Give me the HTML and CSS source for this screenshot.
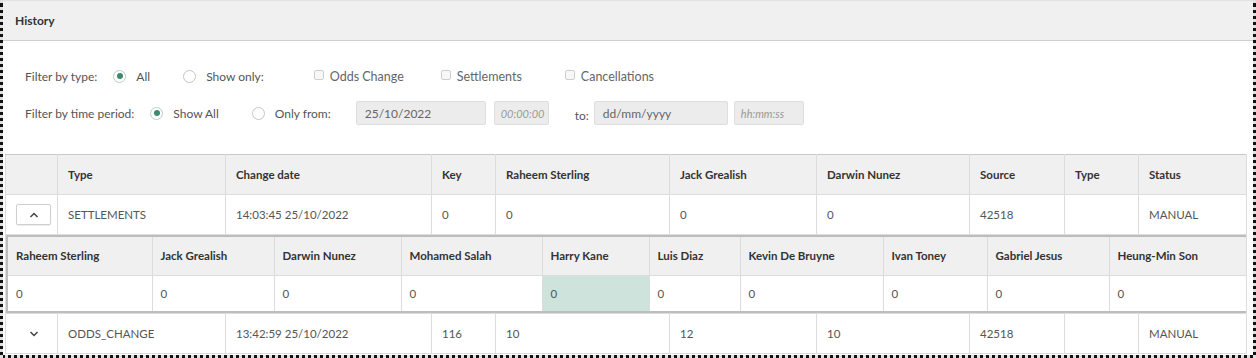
FILE: index.html
```html
<!DOCTYPE html>
<html lang="en">

<head>
    <meta charset="utf-8">
    <meta name="viewport" content="width=device-width, initial-scale=1.0">
    <title>History</title>
    <link rel="stylesheet" href="styles.css">
</head>

<body>
    <div class="ramme">
        <section class="panel">
            <header class="panel-top">
                <h1>History</h1>
            </header>

            <div class="filtre">
                <div class="filter-linje">
                    <span class="label">Filter by type:</span>
                    <label class="valg"><span class="radio valgt"></span>All</label>
                    <label class="valg"><span class="radio"></span>Show only:</label>
                    <label class="check foerste"><span class="boks"></span>Odds Change</label>
                    <label class="check"><span class="boks"></span>Settlements</label>
                    <label class="check sidste"><span class="boks"></span>Cancellations</label>
                </div>
                <div class="filter-linje">
                    <span class="label">Filter by time period:</span>
                    <label class="valg"><span class="radio valgt"></span>Show All</label>
                    <label class="valg"><span class="radio"></span>Only from:</label>
                    <span class="felt dato">25/10/2022</span>
                    <span class="felt tid">00:00:00</span>
                    <span class="til">to:</span>
                    <span class="felt dato2">dd/mm/yyyy</span>
                    <span class="felt tid tid2">hh:mm:ss</span>
                </div>
            </div>

            <table class="historik">
                <colgroup>
                    <col style="width:52px">
                    <col style="width:168px">
                    <col style="width:206px">
                    <col style="width:64px">
                    <col style="width:174px">
                    <col style="width:147px">
                    <col style="width:153px">
                    <col style="width:95px">
                    <col style="width:74px">
                    <col style="width:108px">
                </colgroup>
                <thead>
                    <tr>
                        <th></th>
                        <th>Type</th>
                        <th>Change date</th>
                        <th>Key</th>
                        <th>Raheem Sterling</th>
                        <th>Jack Grealish</th>
                        <th>Darwin Nunez</th>
                        <th>Source</th>
                        <th>Type</th>
                        <th>Status</th>
                    </tr>
                </thead>
                <tbody>
                    <tr>
                        <td class="knap-celle">
                            <button class="fold aaben">
                                <svg width="10" height="6" viewBox="0 0 10 6"><path d="M1.5 5 L5 1.5 L8.5 5" fill="none" stroke="#444" stroke-width="1.5"/></svg>
                            </button>
                        </td>
                        <td>SETTLEMENTS</td>
                        <td>14:03:45 25/10/2022</td>
                        <td>0</td>
                        <td>0</td>
                        <td>0</td>
                        <td>0</td>
                        <td>42518</td>
                        <td></td>
                        <td>MANUAL</td>
                    </tr>
                    <tr class="detalje-raekke">
                        <td colspan="10">
                            <table class="detalje">
                                <colgroup>
                                    <col style="width:145px">
                                    <col style="width:122px">
                                    <col style="width:127px">
                                    <col style="width:141px">
                                    <col style="width:107px">
                                    <col style="width:91px">
                                    <col style="width:143px">
                                    <col style="width:104px">
                                    <col style="width:122px">
                                    <col style="width:139px">
                                </colgroup>
                                <thead>
                                    <tr>
                                        <th>Raheem Sterling</th>
                                        <th>Jack Grealish</th>
                                        <th>Darwin Nunez</th>
                                        <th>Mohamed Salah</th>
                                        <th>Harry Kane</th>
                                        <th>Luis Diaz</th>
                                        <th>Kevin De Bruyne</th>
                                        <th>Ivan Toney</th>
                                        <th>Gabriel Jesus</th>
                                        <th>Heung-Min Son</th>
                                    </tr>
                                </thead>
                                <tbody>
                                    <tr>
                                        <td>0</td>
                                        <td>0</td>
                                        <td>0</td>
                                        <td>0</td>
                                        <td class="markeret">0</td>
                                        <td>0</td>
                                        <td>0</td>
                                        <td>0</td>
                                        <td>0</td>
                                        <td>0</td>
                                    </tr>
                                </tbody>
                            </table>
                        </td>
                    </tr>
                    <tr>
                        <td class="knap-celle">
                            <button class="fold">
                                <svg width="10" height="6" viewBox="0 0 10 6"><path d="M1.5 1 L5 4.5 L8.5 1" fill="none" stroke="#444" stroke-width="1.5"/></svg>
                            </button>
                        </td>
                        <td>ODDS_CHANGE</td>
                        <td>13:42:59 25/10/2022</td>
                        <td>116</td>
                        <td>10</td>
                        <td>12</td>
                        <td>10</td>
                        <td>42518</td>
                        <td></td>
                        <td>MANUAL</td>
                    </tr>
                </tbody>
            </table>
        </section>
    </div>
</body>

</html>
```

FILE: styles.css
```css
* {
    box-sizing: border-box;
}

body {
    margin: 0;
    font-family: "Lato", "Open Sans", sans-serif;
    color: #444;
    background: #fff;
}

/* stiplet kant rundt om udsnittet */
.ramme {
    height: 358px;
    overflow: hidden;
    background-color: #111;
    border: 3px dotted #e0e0e0;
    border-top: none;
}

.panel {
    background: #fff;
    height: 100%;
}

.panel-top {
    height: 41px;
    background: #f0f0f0;
    border-top: 1px solid #e2e2e2;
    border-bottom: 1px solid #cfcfcf;
    display: flex;
    align-items: center;
    padding-left: 12px;
}

h1 {
    margin: 0;
    font-size: 12px;
    font-weight: 700;
    color: #333;
}

.filtre {
    padding: 23px 0 29px 22px;
    display: flex;
    flex-direction: column;
    gap: 13px;
    font-size: 12px;
    color: #555;
}

.filter-linje {
    display: flex;
    align-items: center;
    height: 24px;
}

.label {
    margin-right: 16px;
}

.valg {
    display: flex;
    align-items: center;
    gap: 10px;
    margin-right: 33px;
}

.radio {
    width: 13px;
    height: 13px;
    border: 1px solid #c4c4c4;
    border-radius: 50%;
    background: #fff;
    position: relative;
}

.radio.valgt {
    border-color: #b7cfc6;
}

.radio.valgt::after {
    content: "";
    position: absolute;
    top: 2.5px;
    left: 2.5px;
    width: 6px;
    height: 6px;
    border-radius: 50%;
    background: #3f8a6c;
}

.check {
    display: flex;
    align-items: center;
    gap: 6px;
    margin-left: 37px;
    font-size: 12.5px;
    color: #666;
}

.check.foerste {
    margin-left: 17px;
}

.check.sidste {
    margin-left: 43px;
}

.boks {
    width: 10px;
    height: 10px;
    border: 1px solid #cfcfcf;
    border-radius: 2px;
    background: #f7f7f7;
    margin-top: -3px;
}

.felt {
    height: 24px;
    display: flex;
    align-items: center;
    padding-left: 8px;
    background: #ececec;
    border: 1px solid #dedede;
    border-radius: 2px;
    color: #666;
}

.dato {
    width: 130px;
    margin-left: -8px;
}

.dato2 {
    width: 134px;
}

.tid {
    width: 55px;
    margin-left: 8px;
    font-style: italic;
    color: #999;
    font-size: 11px;
    padding-left: 6px;
}

.tid2 {
    width: 70px;
    margin-left: 6px;
}

.til {
    margin: 5px 5px 0 26px;
}

/* tabeller */
table {
    border-collapse: collapse;
    table-layout: fixed;
}

.historik {
    width: 1241px;
    margin-left: 2px;
    font-size: 11.5px;
}

.historik th,
.historik td {
    border: 1px solid #dcdcdc;
    text-align: left;
    padding: 0 10px;
    overflow: hidden;
    white-space: nowrap;
}

.historik th {
    height: 40px;
    background: #f0f0f0;
    color: #333;
    font-weight: 700;
}

.historik td {
    height: 40px;
    color: #555;
}

.historik > thead th {
    border-top-color: #c8c8c8;
}

.knap-celle {
    text-align: center !important;
}

.fold {
    width: 35px;
    height: 21px;
    border: 1px solid transparent;
    border-radius: 2px;
    background: #fff;
    display: inline-flex;
    align-items: center;
    justify-content: center;
    padding: 0;
}

.fold.aaben {
    border-color: #cfcfcf;
    box-shadow: 0 1px 1px rgba(0, 0, 0, .08);
}

.detalje-raekke > td {
    padding: 0 !important;
    height: auto !important;
}

.detalje {
    width: 1241px;
    border: 2px solid #bdbdbd;
}

.detalje th,
.detalje td {
    padding: 0 8px !important;
}

.detalje th {
    height: 39px !important;
}

.detalje td {
    height: 37px !important;
}

.markeret {
    background: #cde3dc;
}
```
